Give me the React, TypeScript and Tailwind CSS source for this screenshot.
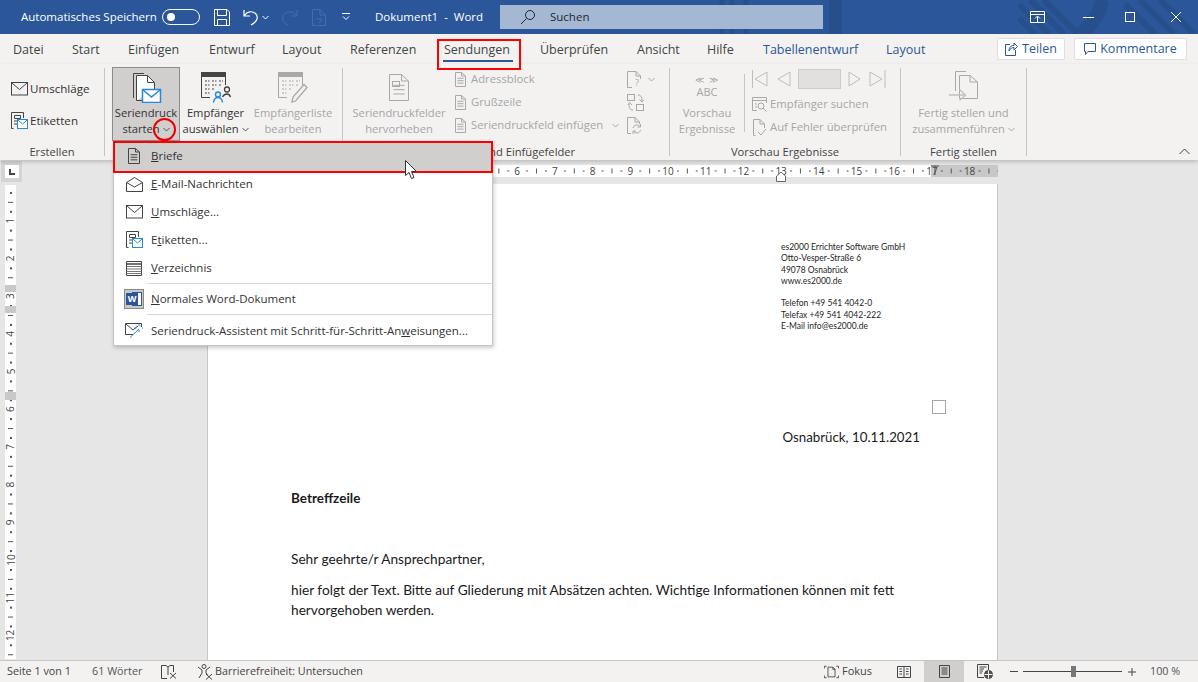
import type { ReactNode } from 'react';

const gray = '#a8a8a8';
const dark = '#444444';
const blue = '#2b88d8';

function Chevron({ color = '#555555', className = '' }: { color?: string; className?: string }) {
  return (
    <svg className={`inline-block ${className}`} width="7" height="5" viewBox="0 0 7 5" fill="none" stroke={color}>
      <path d="M.5 1l3 3 3-3" />
    </svg>
  );
}

// sheet with a folded corner, used all over the ribbon
function Sheet({ w, h, color, lines = 3, box }: { w: number; h: number; color: string; lines?: number; box?: boolean }) {
  const fold = Math.round(w * 0.35);
  return (
    <svg width={w} height={h} viewBox={`0 0 ${w} ${h}`} fill="none" stroke={color} className="shrink-0">
      <path d={`M.5 .5H${w - fold - 0.5}L${w - 0.5} ${fold}V${h - 0.5}H.5Z M${w - fold - 0.5} .5V${fold}H${w - 0.5}`} />
      {box && <rect x="3.500" y="7.500" width="7" height="5" />}
      {Array.from({ length: lines }).map((_, i) => (
        <path key={i} d={`M${w * 0.22} ${h * 0.42 + i * (h * 0.16)}H${w * 0.78}`} />
      ))}
    </svg>
  );
}

function SeriendruckIcon() {
  return (
    <svg className="ml-[2px]" width="30" height="31" viewBox="0 0 30 31" fill="none">
      <path d="M1.500 26V1.500H12" stroke="#444" />
      <path d="M4.500 28.500V3.500H15.500L22.500 10.500V17M4.500 28.500H10" stroke="#444" fill="#fff" />
      <path d="M15.500 3.500V10.500H22.500" stroke="#444" />
      <rect x="10.500" y="17.500" width="18" height="13" fill="#fff" stroke={blue} strokeWidth="1.500" />
      <path d="M11 18l8.500 7L28 18" stroke={blue} strokeWidth="1.500" />
    </svg>
  );
}

function ListIcon({ color, pen }: { color: string; pen?: boolean }) {
  return (
    <svg width="30" height="31" viewBox="0 0 30 31" fill="none" stroke={color}>
      <path d="M.5 25.500V.5H24.500V13M.5 25.500H9" />
      <rect x=".5" y=".5" width="24" height="4" fill={color} />
      <path d="M4 9h4.500M11 9h4.500M18 9h4M4 13h4.500M11 13h4.500M18 13h2M4 17h4.500M11 17h2M4 21h4.500" strokeDasharray="2 1" />
      {pen ? (
        <path d="M14 30l1-5L26 12.500l3 3L17.500 29Z" fill="#f3f2f1" strokeWidth="1.300" />
      ) : (
        <>
          <circle cx="17" cy="22.500" r="2.500" stroke={blue} strokeWidth="1.400" />
          <path d="M12.500 30.500c.5-3.500 2-5 4.500-5s4 1.500 4.500 5" stroke={blue} strokeWidth="1.400" />
          <circle cx="26" cy="17.500" r="2.500" stroke="#444" strokeWidth="1.300" />
          <path d="M21.500 25c1-2 2-3 4.500-3s3 1 3.500 3" stroke="#444" strokeWidth="1.300" />
        </>
      )}
    </svg>
  );
}

function FinishIcon() {
  return (
    <svg width="30" height="32" viewBox="0 0 30 32" fill="none" stroke={gray}>
      <path d="M6.500 20V.5H17" />
      <path d="M10.500 27.500V4.500H21L28.500 11V27.500Z" fill="#f3f2f1" />
      <path d="M21 4.500V11H28.500" />
      <path d="M0 24h15M10.500 18.500l6 5.500-6 5.500" stroke="#c0c0c0" strokeWidth="1.300" />
    </svg>
  );
}

function Envelope({ color = '#444444' }: { color?: string }) {
  return (
    <svg width="17" height="14" viewBox="0 0 17 14" fill="none" stroke={color}>
      <rect x=".5" y=".5" width="16" height="12.500" />
      <path d="M1 1l7.500 6.500L16 1" />
    </svg>
  );
}

function LabelIcon() {
  return (
    <svg width="17" height="18" viewBox="0 0 17 18" fill="none" stroke="#444">
      <path d="M2.500 16.500H.5V.5H12.500V6" />
      <path d="M3.500 3.500H9.500V6.500H3.500Z" />
      <path d="M3 9H6M3 12H6" />
      <rect x="6.500" y="7.500" width="10" height="9" fill="#fff" stroke={blue} />
      <path d="M7 8l4.500 4L16 8" stroke={blue} />
    </svg>
  );
}

function Group({ className, label, children }: { className: string; label: string; children: ReactNode }) {
  return (
    <div className={`flex flex-col h-[88px] mt-[4px] border-r border-[#c6c6c6] shrink-0 ${className}`}>
      <div className="flex-1 flex min-h-0">{children}</div>
      <div className="h-[16px] pt-[8px] leading-[8px] text-center text-[11.200px] text-[#444444] whitespace-nowrap">{label}</div>
    </div>
  );
}

function BigButton({ icon, top, bottom, w, disabled, active, chevron }: {
  icon: ReactNode; top: string; bottom: string; w: string; disabled?: boolean; active?: boolean; chevron?: boolean;
}) {
  return (
    <div className={`flex flex-col items-center h-[74px] -mt-[1px] pt-[2px] shrink-0 border ${w} ${active ? 'bg-[#d0cfcd] border-[#8c8c8c]' : 'border-transparent'} ${disabled ? 'text-[#a6a6a6]' : 'text-[#333333]'}`}>
      <div className="h-[34px] flex items-center justify-center">{icon}</div>
      <div className="mt-[1px] text-[11.200px] leading-[16px] whitespace-nowrap">{top}</div>
      <div className="text-[11.200px] leading-[16px] whitespace-nowrap">
        {bottom}{chevron && <Chevron className="ml-[3px] mb-[2px]" color={disabled ? gray : '#555555'} />}
      </div>
    </div>
  );
}

function SmallRow({ icon, text, tight, after }: { icon: ReactNode; text: string; tight?: boolean; after?: ReactNode }) {
  return (
    <div className="h-[23px] flex items-center whitespace-nowrap text-[11.300px]">
      {icon}<span className={tight ? 'ml-[3px]' : 'ml-[5px]'}>{text}</span>{after}
    </div>
  );
}

function MenuItem({ icon, children, active, h = 'h-[28px]' }: { icon: ReactNode; children: ReactNode; active?: boolean; h?: string }) {
  return (
    <div className={`flex items-center ${h} ${active ? 'bg-[#d0cfcd] shadow-[0_1px_0_#d0cfcd]' : ''}`}>
      <div className="w-[37px] flex justify-center shrink-0 pl-[3px]">{icon}</div>
      <div className="text-[11.500px] text-[#333333] whitespace-nowrap">{children}</div>
    </div>
  );
}

function HRuler() {
  const cm = 37.7;
  const ticks: ReactNode[] = [];
  for (let i = -8; i < 76; i++) {
    const x = 84 + (i * cm) / 4;
    if (x < 0 || x > 791) continue;
    const mod = ((i % 4) + 4) % 4;
    if (mod === 0) {
      const n = Math.abs(i / 4);
      if (n > 0) ticks.push(<text key={i} x={x} y="10" textAnchor="middle" fontSize="10" fill="#444">{n}</text>);
    } else if (mod === 2) {
      ticks.push(<rect key={i} x={x} y="3.500" width="1" height="5" fill="#555" />);
    } else {
      ticks.push(<rect key={i} x={x - 0.5} y="5.500" width="2" height="1" fill="#555" />);
    }
  }
  return (
    <svg width="791" height="17" viewBox="0 0 791 17" className="block">
      <rect width="791" height="12" fill="#fff" />
      <rect width="84" height="12" fill="#c8c8c8" />
      <rect x="724" width="67" height="12" fill="#c8c8c8" />
      {ticks}
      <path d="M569.500 16.500V11L574 7l4.500 4V16.500Z" fill="#fff" stroke="#666" />
      <path d="M724 1h8M728 1v9" stroke="#555" />
    </svg>
  );
}

function VRuler() {
  const cm = 37.7;
  const ticks: ReactNode[] = [];
  for (let i = 0; i < 52; i++) {
    const y = i * (cm / 4) - 2;
    if (y < 0) continue;
    if (i % 4 === 0) {
      ticks.push(
        <text key={i} x="5.500" y={y} textAnchor="middle" dominantBaseline="central" fontSize="10" fill="#444" transform={`rotate(-90 5.500 ${y})`}>{i / 4}</text>
      );
    } else if (i % 4 === 2) {
      ticks.push(<rect key={i} x="3" y={y} width="5" height="1" fill="#555" />);
    } else {
      ticks.push(<rect key={i} x="5" y={y - 0.5} width="2" height="2" fill="#555" />);
    }
  }
  return (
    <svg width="11" height="474" viewBox="0 0 11 474" className="block">
      <rect width="11" height="474" fill="#fff" />
      {ticks}
      <rect y="100" width="11" height="7" fill="#c8c8c8" />
      <rect y="121" width="11" height="7" fill="#c8c8c8" />
      <rect y="207" width="11" height="8" fill="#c8c8c8" />
    </svg>
  );
}

export default function App() {
  const tabs: [string, string, boolean?][] = [
    ['Datei', 'w-[59px]'], ['Start', 'w-[56px]'], ['Einfügen', 'w-[81px]'], ['Entwurf', 'w-[73px]'], ['Layout', 'w-[68px]'],
    ['Referenzen', 'w-[94px]'], ['Sendungen', 'w-[96px] font-medium'], ['Überprüfen', 'w-[97px]'], ['Ansicht', 'w-[70px]'], ['Hilfe', 'w-[56px]'],
    ['Tabellenentwurf', 'w-[123px]', true], ['Layout', 'w-[60px]', true],
  ];

  return (
    <div className="relative w-[1198px] h-[682px] overflow-hidden flex flex-col bg-[#e6e6e6] font-['Open_Sans',sans-serif] text-[#333333]">
      {/* Title bar */}
      <div className="relative h-[34px] shrink-0 bg-[#2b579a] text-white flex items-center overflow-hidden">
        <svg className="absolute inset-0" width="1198" height="34" viewBox="0 0 1198 34" fill="none" stroke="#274f8c">
          <path d="M835.500 0V34" strokeWidth="13" />
          <path d="M746 0V34M732 0V34M722 0V34" strokeWidth="5" />
          <path d="M1019 4l30 30M1019 18l16 16M1030 0l34 34M1044 0l34 34" strokeWidth="6" />
          <path d="M1102 0C1100 14 1090 28 1080 34" strokeWidth="14" />
          <path d="M1125 4l30 30M1140 0l34 34M1160 0l34 34" strokeWidth="6" />
        </svg>
        <div className="relative flex items-center h-full w-full">
          <span className="ml-[21px] w-[141px] text-[11.500px] whitespace-nowrap">Automatisches Speichern</span>
          <div className="w-[38px] h-[16px] rounded-full border border-white flex items-center pl-[4px]">
            <div className="w-[8px] h-[8px] rounded-full bg-white" />
          </div>
          <svg className="ml-[14px]" width="16" height="17" viewBox="0 0 16 17" fill="none" stroke="#fff">
            <path d="M.5 .5H13L15.500 3V16.500H.5Z M3.500 .5V6.500H12.500V.5 M3.500 16.500V10.500H12.500V16.500" />
          </svg>
          <svg className="ml-[13px]" width="16" height="18" viewBox="0 0 16 18" fill="none" stroke="#fff" strokeWidth="1.200">
            <path d="M1 2V8H7M1.500 7.500C4 3.500 9 2.500 12.500 5.500C16 9 14 14 8 17" />
          </svg>
          <Chevron color="#fff" className="ml-[3px]" />
          <svg className="ml-[12px]" width="17" height="18" viewBox="0 0 17 18" fill="none" stroke="#466fa8">
            <path d="M16 2V8H10M15.500 7.500C13 3.500 8 2.500 4 5.500C0 9 1 15 7 17" />
          </svg>
          <svg className="ml-[14px]" width="14" height="17" viewBox="0 0 14 17" fill="none" stroke="#466fa8">
            <path d="M.5 16.500V.5H8L13.500 6V16.500Z M8 .5V6H13.500 M4 10h6l-3 4" />
          </svg>
          <svg className="ml-[15px]" width="10" height="8" viewBox="0 0 10 8" fill="none" stroke="#fff">
            <path d="M1 .5H9M2 3.500l3 3 3-3" />
          </svg>
          <span className="ml-[24px] w-[125px] text-[11.500px] whitespace-nowrap">Dokument1&nbsp; -&nbsp; Word</span>
          <div className="w-[323px] h-[24px] bg-[#a5b8d3] flex items-center text-[#262626] text-[11.500px]">
            <svg className="ml-[20px]" width="16" height="16" viewBox="0 0 16 16" fill="none" stroke="#262626">
              <circle cx="10" cy="6" r="4.500" />
              <path d="M6.500 9.500L1 15" />
            </svg>
            <span className="ml-[14px]">Suchen</span>
          </div>
          <div className="ml-auto flex items-center">
            <svg width="15" height="12" viewBox="0 0 15 12" fill="none" stroke="#fff">
              <path d="M.5 .5H14.500V11.500H.5Z M.5 3.500H14.500 M7.500 11V5.500 M5 7.500l2.500-2.500 2.500 2.500" />
            </svg>
            <svg className="ml-[38px]" width="11" height="1" viewBox="0 0 11 1"><rect width="11" height="1" fill="#fff" /></svg>
            <svg className="ml-[31px]" width="10" height="10" viewBox="0 0 10 10" fill="none" stroke="#fff"><rect x=".5" y=".5" width="9" height="9" /></svg>
            <svg className="ml-[36px] mr-[17px]" width="10" height="10" viewBox="0 0 10 10" fill="none" stroke="#fff"><path d="M0 0l10 10M10 0L0 10" /></svg>
          </div>
        </div>
      </div>

      {/* Tabs */}
      <div className="h-[30px] shrink-0 bg-[#f3f2f1] flex items-center pl-[13px] pt-[3px] text-[12.500px]">
        {tabs.map(([name, w, ctx], i) => (
          <div key={i} className={`${w} shrink-0 whitespace-nowrap ${ctx ? 'text-[#2b579a]' : 'text-[#444444]'}`}>{name}</div>
        ))}
        <div className="ml-auto self-start mt-[1px] flex items-center gap-[9px] pr-[11px] text-[#2b579a] text-[12.500px] font-medium">
          <div className="w-[68px] h-[22px] bg-white border border-[#e1dfdd] rounded-[2px] flex items-center justify-center gap-[4px]">
            <svg width="13" height="14" viewBox="0 0 13 14" fill="none" stroke="#2b579a">
              <path d="M5 2.500H.5V13.500H10.500V8 M4 9c0-4 2-5.500 5-5.500V1l3.500 3.500L9 8V5.500C7 5.500 5 6.500 4 9Z" />
            </svg>
            Teilen
          </div>
          <div className="w-[113px] h-[22px] bg-white border border-[#e1dfdd] rounded-[2px] flex items-center justify-center gap-[4px]">
            <svg width="12" height="12" viewBox="0 0 12 12" fill="none" stroke="#2b579a">
              <path d="M.5 .5H11.500V8.500H4L1.500 11.500V8.500H.5Z" />
            </svg>
            Kommentare
          </div>
        </div>
      </div>

      {/* Ribbon */}
      <div className="relative h-[96px] shrink-0 bg-[#f3f2f1] shadow-[0_2px_4px_rgba(0,0,0,0.18)] z-10 flex">
        <Group className="w-[105px]" label="Erstellen">
          <div className="pl-[11px] pt-[5px] text-[#333333]">
            <div className="h-[32px] flex items-center gap-[2px] text-[11.600px]"><Envelope />Umschläge</div>
            <div className="h-[32px] flex items-center gap-[2px] text-[11.600px]"><LabelIcon />Etiketten</div>
          </div>
        </Group>

        <Group className="w-[238px]" label="">
          <div className="pl-[7px] flex">
            <BigButton w="w-[68px]" active icon={<SeriendruckIcon />} top="Seriendruck" bottom="starten" chevron />
            <BigButton w="w-[71px]" icon={<ListIcon color={dark} />} top="Empfänger" bottom="auswählen" chevron />
            <BigButton w="w-[84px]" disabled icon={<ListIcon color={gray} pen />} top="Empfängerliste" bottom="bearbeiten" />
          </div>
        </Group>

        <Group className="w-[327px]" label="Schreib- und Einfügefelder">
          <div className="pl-[7px] flex text-[#a6a6a6]">
            <BigButton w="w-[98px]" disabled icon={<Sheet w={20} h={27} color={gray} lines={3} box />} top="Seriendruckfelder" bottom="hervorheben" />
            <div className="ml-[7px] w-[172px]">
              <SmallRow icon={<Sheet w={11} h={15} color={gray} />} text="Adressblock" />
              <SmallRow icon={<Sheet w={11} h={15} color={gray} />} text="Grußzeile" />
              <SmallRow icon={<Sheet w={11} h={15} color={gray} />} text="Seriendruckfeld einfügen" after={<Chevron color={gray} className="ml-[9px]" />} />
            </div>
            <div className="w-[40px]">
              <div className="h-[23px] flex items-center gap-[5px]">
                <svg width="16" height="21" viewBox="0 0 16 21" fill="none" stroke={gray}><path d="M.5 18.500V2.500H9L13.500 7V10 M9 2.500V7H13.500 M.5 18.500H5" /><text x="8" y="17" fontSize="9" fill={gray} stroke="none">?</text></svg>
                <Chevron color={gray} />
              </div>
              <div className="h-[23px] flex items-center">
                <svg width="17" height="17" viewBox="0 0 17 17" fill="none" stroke={gray}><rect x=".5" y=".5" width="7" height="6" /><rect x="9.500" y="10.500" width="7" height="6" /><path d="M11 1c3 0 4 2 4 6M12.500 5.500L15 8l2-2.500 M6 16c-3 0-4-2-4-6M1 11l1.500-2.500L5 11" /></svg>
              </div>
              <div className="h-[23px] flex items-center">
                <svg width="15" height="17" viewBox="0 0 15 17" fill="none" stroke={gray}><path d="M.5 16.500V.5H8L12.500 5V7 M8 .5V5H12.500 M.5 16.500H4" /><path d="M6 11c.5-2 2-3 3.500-3 1.500 0 2.500.5 3.500 1.500 M13.500 7v3h-3 M13.500 13c-.5 2-2 3-3.500 3-1.500 0-2.500-.5-3.500-1.500 M6 17v-3h3" /></svg>
              </div>
            </div>
          </div>
        </Group>

        <Group className="w-[231px]" label="Vorschau Ergebnisse">
          <div className="flex text-[#a6a6a6] w-full">
            <div className="w-[74px] flex flex-col items-center shrink-0 text-[11.200px] leading-[16px]">
              <div className="text-[9px] leading-[11px] tracking-[1px] mt-[6px] whitespace-nowrap">≪ ≫</div>
              <div className="text-[11px] leading-[12px] mt-[1px]">ABC</div>
              <div className="mt-[7px]">Vorschau</div>
              <div>Ergebnisse</div>
            </div>
            <div className="w-px h-[58px] mt-[6px] bg-[#c6c6c6] shrink-0" />
            <div className="pl-[7px] text-[11.200px]">
              <div className="h-[24px] flex items-center mb-[2px] -mt-[1px]">
                <svg width="136" height="20" viewBox="0 0 136 20" fill="none" stroke="#bdbdbd">
                  <path d="M.5 1V19M15 3L3 10l12 7Z" />
                  <path d="M38 3L26 10l12 7Z" />
                  <rect x="46.500" y=".5" width="42" height="19" fill="#e1e0df" stroke="#cccccc" />
                  <path d="M97 3l11 7-11 7Z" />
                  <path d="M118 3l12 7-12 7Z M133 1V19" />
                </svg>
              </div>
              <SmallRow tight icon={
                <svg width="15" height="15" viewBox="0 0 15 15" fill="none" stroke={gray}><path d="M.5 13.500V.5H14.500V6 M.5 13.500H5 M.5 3.500H14.500" /><circle cx="9" cy="9" r="3" /><path d="M11 11l3.500 3.500" /><path d="M3 7h2M3 10h2" /></svg>
              } text="Empfänger suchen" />
              <SmallRow tight icon={
                <svg width="15" height="17" viewBox="0 0 15 17" fill="none" stroke={gray}><path d="M3.500 16.500H1.500V.5H8L12.500 5V9 M8 .5V5H12.500" /><path d="M6 13l3 3 5-6" /></svg>
              } text="Auf Fehler überprüfen" />
            </div>
          </div>
        </Group>

        <Group className="w-[126px]" label="Fertig stellen">
          <BigButton w="w-full" disabled icon={<FinishIcon />} top="Fertig stellen und" bottom="zusammenführen" chevron />
        </Group>

        <svg className="absolute right-[8px] bottom-[5px]" width="11" height="7" viewBox="0 0 11 7" fill="none" stroke="#444"><path d="M.5 6L5.500 1l5 5" /></svg>
      </div>

      {/* Document area */}
      <div className="flex-1 flex min-h-0">
        <div className="w-[207px] shrink-0 flex flex-col pl-[5px]">
          <div className="-ml-[4px] mt-[1px] w-[21px] h-[21px] bg-[#d4d4d4] flex items-center justify-center">
            <div className="w-[14px] h-[13px] bg-white flex items-center justify-center">
              <div className="w-[6px] h-[6px] border-l-2 border-b-2 border-[#444444]" />
            </div>
          </div>
          <div className="mt-[3px]"><VRuler /></div>
        </div>
        <div className="w-[791px] shrink-0 flex flex-col">
          <div className="mt-[5px] h-[19px] shrink-0"><HRuler /></div>
          <div className="flex-1 bg-white border-r border-l border-[#c6c6c6] font-['Lato',sans-serif] text-[13.700px] text-[#1a1a1a] leading-[20px]">
            <div className="ml-[573px] mt-[58px] text-[8.500px] leading-[11.300px] text-[#262626] whitespace-nowrap">
              <div>es2000 Errichter Software GmbH</div>
              <div>Otto-Vesper-Straße 6</div>
              <div>49078 Osnabrück</div>
              <div>www.es2000.de</div>
              <div className="h-[11.300px]" />
              <div>Telefon +49 541 4042-0</div>
              <div>Telefax +49 541 4042-222</div>
              <div>E-Mail info@es2000.de</div>
            </div>
            <div className="ml-[724px] mt-[68px] w-[14px] h-[14px] border border-[#a8a8a8]" />
            <div className="mr-[77px] mt-[13px] text-right text-[13.300px]">Osnabrück, 10.11.2021</div>
            <div className="ml-[83px] mt-[41px] font-bold text-[13.500px]">Betreffzeile</div>
            <div className="ml-[83px] mt-[41px]">Sehr geehrte/r Ansprechpartner,</div>
            <div className="ml-[83px] mt-[11px] w-[620px]">hier folgt der Text. Bitte auf Gliederung mit Absätzen achten. Wichtige Informationen können mit fett hervorgehoben werden.</div>
          </div>
        </div>
      </div>

      {/* Status bar */}
      <div className="h-[22px] shrink-0 bg-[#f3f2f1] border-t border-[#c6c6c6] flex items-center text-[10.800px] text-[#444444]">
        <span className="ml-[7px] w-[85px] whitespace-nowrap">Seite 1 von 1</span>
        <span className="w-[69px] whitespace-nowrap text-[#555555]">61 Wörter</span>
        <svg width="16" height="14" viewBox="0 0 16 14" fill="none" stroke="#444"><path d="M.5 13.500V.5H5L7 2 9 .5H12.500V7 M.5 13.500H6 M7 2V10 M9 8l6 5.500M15 8l-6 5.500" /></svg>
        <svg className="ml-[20px]" width="16" height="16" viewBox="0 0 16 16" fill="none" stroke="#444"><circle cx="7" cy="2.500" r="2" /><path d="M1 3l4 3v3L2 14M13 3L9 6v3l1.500 2 M9 10l6 5.500M15 10l-6 5.500" /></svg>
        <span className="ml-[2px] whitespace-nowrap">Barrierefreiheit: Untersuchen</span>
        <div className="ml-auto flex items-center h-full">
          <svg width="15" height="14" viewBox="0 0 17 14" fill="none" stroke="#444">
            <path d="M.5 3V.5H3M14 .5H16.500V3M.5 11V13.500H3M14 13.500H16.500V11" />
            <path d="M4.500 12.500V1.500H10L12.500 4V12.500Z M10 1.500V4H12.500" />
          </svg>
          <span className="ml-[3px] w-[55px] text-[11px]">Fokus</span>
          <svg width="14" height="12" viewBox="0 0 14 12" fill="none" stroke="#444"><path d="M.5 .5H13.500V11.500H.5Z M7 .5V11.500 M2.500 3H5M2.500 5.500H5M2.500 8H5M9 3H11.500M9 5.500H11.500M9 8H11.500" /></svg>
          <div className="ml-[13px] w-[40px] h-full bg-[#d0cfcd] flex items-center justify-center">
            <svg width="11" height="13" viewBox="0 0 11 13" fill="none" stroke="#444"><path d="M.5 .5H10.500V12.500H.5Z M2.500 3H8.500M2.500 5H8.500M2.500 7H8.500M2.500 9H8.500" /></svg>
          </div>
          <svg className="ml-[13px]" width="16" height="15" viewBox="0 0 16 15" fill="none" stroke="#444"><path d="M7 13.500H.5V.5H11.500V6 M2.500 3H9.500M2.500 5H7M2.500 7H6M2.500 9H5" /><circle cx="11.500" cy="10.500" r="4" fill="#555" /><path d="M7.500 10.500H15.500M11.500 6.500V14.500" stroke="#f3f2f1" /></svg>
          <div className="ml-[17px] w-[8px] h-px bg-[#444444]" />
          <div className="ml-[5px] relative w-[99px] h-px bg-[#444444]">
            <div className="absolute left-[48px] -top-[5px] w-[5px] h-[11px] bg-[#777777]" />
          </div>
          <svg className="ml-[6px]" width="8" height="8" viewBox="0 0 8 8" stroke="#444"><path d="M0 4H8M4 0V8" /></svg>
          <span className="ml-[14px] w-[48px] whitespace-nowrap text-[#555555]">100 %</span>
        </div>
      </div>

      {/* Dropdown menu */}
      <div className="absolute z-20 left-[113px] top-[141px] w-[380px] h-[205px] bg-white border border-[#c8c6c4] shadow-[1px_2px_4px_rgba(0,0,0,0.2)]">
        <MenuItem active icon={<Sheet w={12} h={16} color="#444444" />}><u>B</u>riefe</MenuItem>
        <MenuItem icon={
          <svg width="17" height="15" viewBox="0 0 17 15" fill="none" stroke="#444"><path d="M.5 14.500V5.500L8.500 .5l8 5V14.500Z M.5 5.500L8.500 10l8-4.500" /></svg>
        }><u>E</u>-Mail-Nachrichten</MenuItem>
        <MenuItem icon={<Envelope />}><u>U</u>mschläge...</MenuItem>
        <MenuItem icon={<LabelIcon />}>E<u>t</u>iketten...</MenuItem>
        <MenuItem icon={
          <svg width="16" height="15" viewBox="0 0 16 15" fill="none" stroke="#444"><path d="M.5 .5H15.500V14.500H.5Z" /><path d="M.5 3H15.500" strokeWidth="1.500" /><path d="M.5 5.500H15.500M.5 8H15.500M.5 10.500H15.500M.5 12.500H15.500" stroke="#777" /></svg>
        }><u>V</u>erzeichnis</MenuItem>
        <div className="ml-[33px] mt-[1px] h-px bg-[#d8d8d8]" />
        <MenuItem h="h-[30px]" icon={
          <div className="w-[20px] h-[20px] bg-[#c8c8c8] border border-[#8a8a8a] flex items-center justify-center relative">
            <div className="w-[10px] h-[14px] bg-white border border-[#2b579a] ml-[6px]" />
            <div className="absolute left-[1px] top-[3px] w-[12px] h-[12px] bg-[#2b579a] text-white text-[9px] leading-[12px] font-bold text-center">W</div>
          </div>
        }><u>N</u>ormales Word-Dokument</MenuItem>
        <div className="ml-[33px] h-px bg-[#d8d8d8]" />
        <MenuItem h="h-[31px]" icon={
          <svg width="18" height="15" viewBox="0 0 18 15" fill="none" stroke="#444"><path d="M8 11.500H.5V.5H16.500V4 M1 1l7 6 5-4" /><path d="M5 14.500L14 6" stroke={blue} /><path d="M14 1v2M14 7v2M11 5h-2M17 5h1M11 2.500l1 1M16 2.500l-1 1" stroke={blue} /></svg>
        }>Seriendruck-Assistent mit Schritt-für-Schritt-An<u>w</u>eisungen...</MenuItem>
      </div>

      {/* Annotations drawn on top of the screenshot */}
      <div className="absolute z-30 left-[443px] top-[60px] w-[70px] h-[2px] bg-[#2b579a]" />
      <div className="absolute z-30 left-[437px] top-[39px] w-[84px] h-[31px] border-2 border-[#ff0000]" />
      <div className="absolute z-30 left-[113px] top-[141px] w-[380px] h-[32px] border-2 border-[#ff0000]" />
      <div className="absolute z-30 left-[153px] top-[118px] w-[23px] h-[23px] rounded-full border-2 border-[#ee0000]" />
      <svg className="absolute z-30 left-[405px] top-[160px]" width="13" height="20" viewBox="0 0 13 20" fill="#fff" stroke="#333">
        <path d="M.5 .5V15.500L4 12.500L6.500 18.500L9 17.500L6.500 11.500H11.500Z" />
      </svg>
    </div>
  );
}
